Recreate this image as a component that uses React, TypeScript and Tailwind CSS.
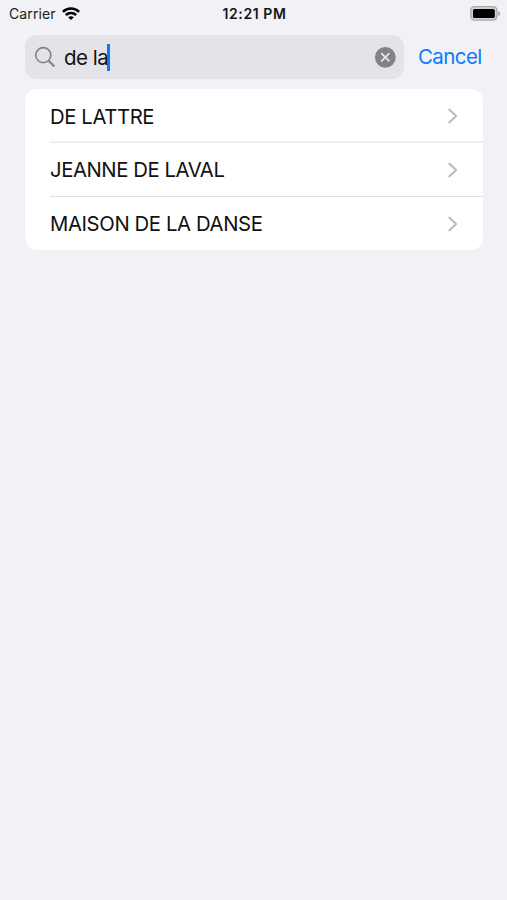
import React from 'react';

const stations = [
  { name: 'DE LATTRE', tracking: 'tracking-[-0.4px]', divider: 'border-b-2 border-[#efeff1] pt-[2px]' },
  { name: 'JEANNE DE LAVAL', tracking: 'tracking-[-0.43px]', divider: 'border-b border-[#e2e2e5]' },
  { name: 'MAISON DE LA DANSE', tracking: 'tracking-[-0.38px]', divider: '' },
];

function StatusBar() {
  return (
    <header className="grid h-[27px] grid-cols-3 items-center pr-[7px] pl-[9px]">
      <div className="flex items-center gap-[6px] text-[#202022]">
        <span className="text-[14px] leading-[18px] tracking-[0.1px]">Carrier</span>
        <svg width="18" height="14" viewBox="0 0 18 14" fill="none" stroke="#000" strokeWidth="2.5">
          <path d="M.9 4.8C5.4.3 12.6.3 17.1 4.8" />
          <path d="M3.8 8c3-2.8 7.4-2.8 10.4 0" />
          <path d="M6.2 10.2c1.6-1.4 4-1.4 5.6 0L9 13.1Z" fill="#000" stroke="none" />
        </svg>
      </div>
      <span className="text-center text-[14px] leading-[18px] font-semibold tracking-[0.6px] text-[#151517]">12:21 PM</span>
      <svg className="-mr-px justify-self-end" width="31" height="16" viewBox="0 0 31 16">
        <rect x=".8" y=".7" width="26.2" height="13.4" rx="3.8" fill="#d2d2d5" stroke="#a9a9ac" strokeWidth="1.3" />
        <rect x="3" y="3" width="21.8" height="9" rx="1.6" fill="#000" />
        <path d="M28.3 5.2c2.4.8 2.4 4 0 4.8Z" fill="#a5a5a8" />
      </svg>
    </header>
  );
}

function SearchBar() {
  return (
    <div className="mt-2 flex h-11 items-center pl-[25px]">
      <div className="flex h-11 w-[379px] items-center rounded-[12px] bg-[#e3e3e8] pr-[8px] pl-[9px]">
        <svg width="22" height="22" viewBox="0 0 22 22" fill="none" stroke="#858589" strokeLinecap="round">
          <circle cx="9.3" cy="9.2" r="7.5" strokeWidth="1.7" />
          <path d="m14.9 14.9 4.9 5" strokeWidth="2.2" />
        </svg>
        <span className="ml-[8px] pt-px text-[20.5px] leading-[26px] tracking-[-0.5px] text-[#111]">de la</span>
        <span className="-ml-px h-[27px] w-[2.5px] bg-[#0a7aff]" />
        <svg className="ml-auto" width="22" height="22" viewBox="0 0 22 22">
          <circle cx="11.3" cy="11.3" r="10.4" fill="#828287" />
          <path d="m7.7 7.7 7.2 7.2m0-7.2-7.2 7.2" stroke="#e9e9ed" strokeWidth="1.7" strokeLinecap="round" />
        </svg>
      </div>
      <button className="ml-[14px] text-[20.5px] leading-[26px] tracking-[-0.6px] text-[#0a7aff]">Cancel</button>
    </div>
  );
}

export default function App() {
  return (
    <div className="h-[900px] w-[507px] overflow-hidden bg-[#f1f1f6] font-['Inter','Liberation_Sans',sans-serif]">
      <StatusBar />
      <SearchBar />
      <ul className="mt-[10px] ml-[25px] w-[458px] overflow-hidden rounded-[12px] bg-white pl-[25px]">
        {stations.map((station) => (
          <li key={station.name} className={`flex h-[54px] items-center justify-between pr-[25px] last:h-[53px] ${station.divider}`}>
            <span className={`pt-px text-[20.3px] leading-[26px] text-[#111] ${station.tracking}`}>{station.name}</span>
            <svg width="10" height="16" viewBox="0 0 10 16" fill="none" stroke="#bcbcc0" strokeWidth="2.2" strokeLinecap="round" strokeLinejoin="round">
              <path d="m1.5 1.7 6.6 6.3-6.6 6.3" />
            </svg>
          </li>
        ))}
      </ul>
    </div>
  );
}
